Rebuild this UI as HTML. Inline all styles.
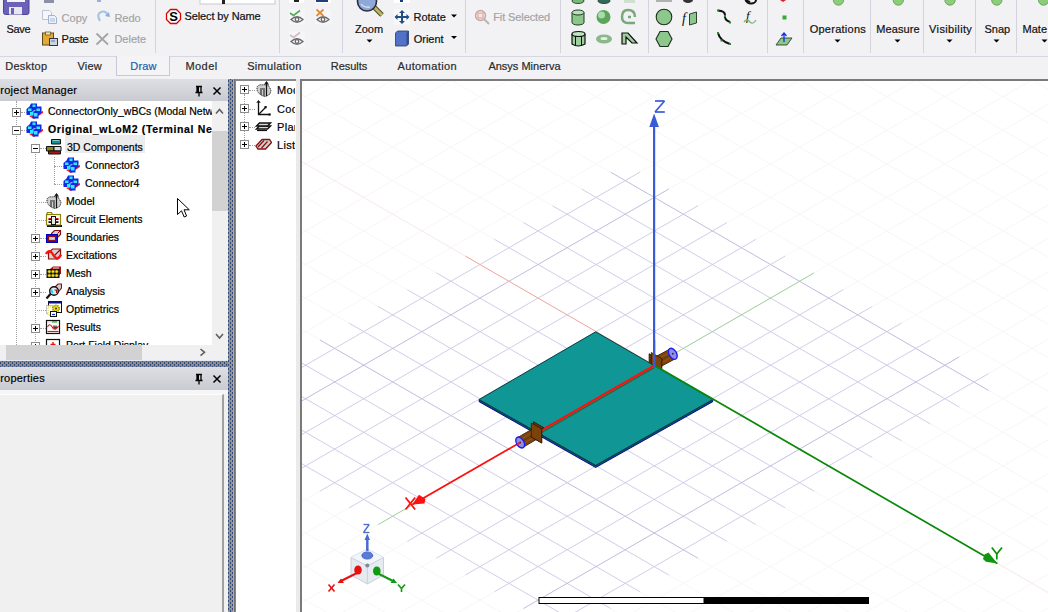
<!DOCTYPE html>
<html><head><meta charset="utf-8">
<style>
*{margin:0;padding:0;box-sizing:border-box}
html,body{width:1048px;height:612px;overflow:hidden;background:#f0f0f0;font-family:"Liberation Sans",sans-serif;font-size:12px;color:#000}
.abs{position:absolute}
.t{position:absolute;white-space:nowrap;line-height:14px;-webkit-text-stroke:0.2px currentColor}
#ribbon{position:absolute;left:0;top:0;width:1048px;height:57px;background:#f2f2f5;border-bottom:1px solid #d6d6e2}
.sep{position:absolute;top:0;width:1px;height:53px;background:#d4d4de}
#tabs{position:absolute;left:0;top:57px;width:1048px;height:22px;background:#f2f2f5}
.tab{position:absolute;top:5px;font-size:12px;color:#1a1a1a}
#drawtab{position:absolute;left:116px;top:56px;width:54px;height:20px;border:1px solid #c8c8dc;border-top:none;background:#f4f4f7}
.hdr{position:absolute;background:linear-gradient(#dedfe4,#c9cbd1);}
.splitV{position:absolute;background-color:#959390;background-image:conic-gradient(from 0deg at 1px 2px,transparent 75%,#2d4a86 0),conic-gradient(from 0deg at 1px 2px,transparent 75%,#2d4a86 0);background-size:4px 4px,4px 4px;background-position:0 1px,2px 3px}
.splitH{position:absolute;background-color:#959390;background-image:conic-gradient(from 0deg at 2px 1px,transparent 75%,#2d4a86 0),conic-gradient(from 0deg at 2px 1px,transparent 75%,#2d4a86 0);background-size:4px 4px,4px 4px;background-position:1px 0,3px 2px}
.row{position:absolute;height:18px;white-space:nowrap;font-size:12px;line-height:18px}
.pm{position:absolute;width:9px;height:9px;border:1px solid #8c8c8c;background:#fff}
.pm:before{content:"";position:absolute;left:1px;top:3px;width:5px;height:1px;background:#000}
.pm.plus:after{content:"";position:absolute;left:3px;top:1px;width:1px;height:5px;background:#000}
.tr{font-size:10.5px}
.rt{font-size:11px;color:#111}
.tb{font-size:11px;color:#2a2a2a}
.dotv{position:absolute;width:1px;border-left:1px dotted #a0a0a0}
.doth{position:absolute;height:1px;border-top:1px dotted #a0a0a0}
</style></head><body>

<!-- RIBBON -->
<div id="ribbon">
  <div class="sep" style="left:155px"></div>
  <div class="sep" style="left:279px"></div>
  <div class="sep" style="left:342px"></div>
  <div class="sep" style="left:465px"></div>
  <div class="sep" style="left:560px"></div>
  <div class="sep" style="left:648px"></div>
  <div class="sep" style="left:707px"></div>
  <div class="sep" style="left:767px"></div>
  <div class="sep" style="left:803px"></div>
  <div class="sep" style="left:870px"></div>
  <div class="sep" style="left:923px"></div>
  <div class="sep" style="left:975px"></div>
  <div class="sep" style="left:1016px"></div>
<svg class="abs" style="left:0;top:0" width="1048" height="57">
 <!-- Save floppy -->
 <path d="M3.5,-4 H29 V12.5 Q29,14.5 27,14.5 H5.5 Q3.5,14.5 3.5,12.5 Z" fill="#6b62b8" stroke="#4e4599" stroke-width="1"/>
 <rect x="7" y="-3" width="18" height="5" fill="#f4f4f8"/>
 <rect x="9" y="7" width="13" height="7.5" fill="#e8e8ec"/>
 <rect x="11" y="8" width="3" height="6" fill="#6b62b8"/>
 <!-- top cut-off icons -->
 <rect x="44" y="0" width="10" height="3" fill="#8a90a8"/>
 <rect x="97" y="0" width="4" height="2" fill="#9ab0d8"/>
 <rect x="200" y="-2" width="75" height="6" fill="#fff" stroke="#c8c8d0"/>
 <rect x="222" y="0" width="3" height="4" fill="#222"/>
 <rect x="289" y="0" width="15" height="3" fill="#fff"/><rect x="294" y="0" width="5" height="2" fill="#222"/>
 <rect x="315" y="0" width="16" height="3" fill="#fff"/><rect x="316" y="0" width="12" height="2" fill="#1f3f7a"/>
 <rect x="394" y="0" width="16" height="3" fill="#fff"/><rect x="400" y="0" width="3" height="2" fill="#1a3c7a"/>
 <!-- Copy (grey) -->
 <path d="M42.5,10.5 h7 l2,2 v7 h-9 z" fill="#f4f6fa" stroke="#b8c4d8"/>
 <path d="M48.5,15.5 h6 l2,2 v6 h-8 z" fill="#eef2f8" stroke="#9fb2d0"/>
 <line x1="50" y1="19" x2="55" y2="19" stroke="#a8bcd8"/><line x1="50" y1="21" x2="55" y2="21" stroke="#a8bcd8"/>
 <!-- Redo (grey) -->
 <path d="M100,21 Q96,14 101,12 Q106,10 108,16" fill="none" stroke="#a8c4e4" stroke-width="2.2"/>
 <path d="M105,16 L110,17 L109,12 Z" fill="#8ab0dc"/>
 <!-- Paste -->
 <rect x="42.5" y="33" width="11" height="12" fill="#e6a832" stroke="#5a4a20"/>
 <rect x="45.5" y="32" width="5" height="3" fill="#f2e6a0" stroke="#6a5a30" stroke-width="0.8"/>
 <rect x="49.5" y="38.5" width="8" height="7" fill="#c8d4e4" stroke="#303848"/>
 <line x1="51" y1="41" x2="55" y2="41" stroke="#6a7890"/>
 <!-- Delete X -->
 <path d="M96.5,33.5 L108,44.5 M108,33.5 L96.5,44.5" stroke="#a4a4a4" stroke-width="1.8"/>
 <!-- Select by name -->
 <path d="M170.5,9.5 h6 l4,4 v6 l-4,4 h-6 l-4,-4 v-6 z" fill="#fff" stroke="#e00000" stroke-width="1.3"/>
 <text x="173.6" y="21.3" font-family="Liberation Sans" font-weight="bold" font-size="13" text-anchor="middle" fill="#000">S</text>
 <!-- Eyes -->
 <rect x="289" y="9.5" width="16" height="15" fill="#f6f6f8"/>
 <rect x="315" y="9.5" width="16" height="15" fill="#f6f6f8"/>
 <rect x="289" y="31.5" width="16" height="15" fill="#f6f6f8"/>
 <g fill="none" stroke="#6a6a6a" stroke-width="1.3">
  <path d="M291,19.5 Q297,14 303,19.5 Q297,25 291,19.5 Z"/><circle cx="297" cy="19.5" r="1.8"/>
  <path d="M317,19.5 Q323,14 329,19.5 Q323,25 317,19.5 Z"/><circle cx="323" cy="19.5" r="1.8"/>
  <path d="M291,41.5 Q297,36 303,41.5 Q297,47 291,41.5 Z"/><circle cx="297" cy="41.5" r="1.8"/>
 </g>
 <path d="M290,13 L293.5,15.5 L300,10.5" fill="none" stroke="#58a858" stroke-width="1.6"/>
 <path d="M316.5,9.5 L323.5,16 M323.5,9.5 L316.5,16" stroke="#e48a30" stroke-width="1.8"/>
 <path d="M290,35 L293.5,37.5 L300,32.5" fill="none" stroke="#d4b8c4" stroke-width="1.6"/>
 <!-- Zoom magnifier -->
 <line x1="374" y1="7" x2="382" y2="15" stroke="#4a4a2a" stroke-width="5"/>
 <line x1="374" y1="7" x2="382" y2="15" stroke="#c0b860" stroke-width="3"/>
 <circle cx="367" cy="1.5" r="9.5" fill="#8fa8d8" stroke="#2a2a3a" stroke-width="1.6"/>
 <path d="M361,4 Q364,8 370,7" fill="none" stroke="#e0e8f8" stroke-width="1.2"/>
 <path d="M366.5,39.5 h6 l-3,3 z" fill="#000"/>
 <!-- Rotate -->
 <rect x="394" y="9.5" width="16" height="15" fill="#f8f8fa"/>
 <path d="M396,17 h12 M402,11 v12" stroke="#1f4f86" stroke-width="2"/>
 <path d="M394.5,17 l3,-3 v6 z M409.5,17 l-3,-3 v6 z M402,10 l-3,3 h6 z M402,24 l-3,-3 h6 z" fill="#1f4f86"/>
 <path d="M451,14.5 h6 l-3,3 z" fill="#000"/>
 <!-- Orient -->
 <path d="M395.5,33 l2,-2 h11 v13 l-2,2 h-11 z" fill="#5272c8" stroke="#2a3a6a" stroke-width="0.8"/>
 <path d="M406.5,33 l2,-2 v13 l-2,2 z" fill="#3a4a8a"/>
 <path d="M451,36 h6 l-3,3 z" fill="#000"/>
 <!-- Fit selected (grey) -->
 <circle cx="480.5" cy="15.5" r="5" fill="#f4e8e8" stroke="#c0a8a8" stroke-width="1.4"/>
 <rect x="478" y="13" width="5" height="5" fill="none" stroke="#e09a8a"/>
 <line x1="484" y1="19" x2="489" y2="24" stroke="#b8b8b0" stroke-width="2"/>
 <!-- 3D primitives -->
 <g stroke="#2a3a2a" stroke-width="0.9">
  <ellipse cx="578" cy="1" rx="6" ry="2.5" fill="#7ab87a"/>
  <ellipse cx="604" cy="1" rx="6" ry="2.5" fill="#2f6a5a"/>
 </g>
 <rect x="624" y="0" width="11" height="3" fill="#cfe0cf"/>
 <!-- cylinder -->
 <path d="M572,12.5 v10 a6,2.5 0 0 0 12,0 v-10" fill="#8cc68c" stroke="#1f3a1f"/>
 <ellipse cx="578" cy="12.5" rx="6" ry="2.5" fill="#b8e0b8" stroke="#1f3a1f"/>
 <!-- sphere -->
 <circle cx="603.5" cy="17" r="7" fill="#5aa65a"/>
 <circle cx="601.5" cy="15" r="3.5" fill="#a8dca8"/>
 <!-- helix -->
 <path d="M635,17 Q635,10 628,10 Q622,10 622,17 Q622,23 628,23 h7 M631,17 h-3" fill="none" stroke="#7aa87a" stroke-width="2.5"/>
 <!-- poly cylinder -->
 <path d="M572,34 v10 q6,4 13,0 v-10" fill="#9ed09e" stroke="#111" stroke-width="1.2"/>
 <ellipse cx="578.5" cy="34" rx="6.5" ry="2.5" fill="#c0e4c0" stroke="#111" stroke-width="1.2"/>
 <path d="M575.5,36 v9 M581.5,36 v9" stroke="#111"/>
 <!-- torus -->
 <ellipse cx="604" cy="39" rx="8" ry="4.5" fill="#8ab88a"/>
 <ellipse cx="604" cy="38.5" rx="3.5" ry="1.5" fill="#e8f0e8"/>
 <!-- bend -->
 <path d="M622,44 V33 h6 l9,10 h-5 l-6,-6 v7 z" fill="#9ed09e" stroke="#111" stroke-width="1.2"/>
 <!-- top shapes group 2 -->
 <rect x="656" y="0" width="16" height="2" fill="#b0b0b0"/>
 <ellipse cx="688" cy="0" rx="5" ry="3" fill="#333"/>
 <!-- circle -->
 <circle cx="664" cy="17" r="7.8" fill="#8cc78c" stroke="#1f2f1f" stroke-width="1.1"/>
 <!-- f rect -->
 <text x="682" y="23" font-family="Liberation Serif" font-style="italic" font-size="14" fill="#111">f</text>
 <path d="M689.5,14 l7,-2 v11 l-7,2 z" fill="#8cc78c" stroke="#1f2f1f" stroke-width="0.9"/>
 <!-- hexagon -->
 <path d="M660,31.5 h8 l4,7.5 l-4,7.5 h-8 l-4,-7.5 z" fill="#8cc78c" stroke="#1f2f1f" stroke-width="1.1"/>
 <!-- polylines -->
 <path d="M745,0 l5,2" stroke="#111" stroke-width="2"/>
 <ellipse cx="751" cy="0" rx="5" ry="3.5" fill="none" stroke="#111" stroke-width="2"/>
 <path d="M718,10.5 Q725,11 725,15 Q724,20 730,22" fill="none" stroke="#111" stroke-width="2"/>
 <rect x="717" y="9.5" width="2" height="2" fill="#2a8a2a"/><rect x="724" y="15" width="2" height="2" fill="#2a8a2a"/><rect x="729" y="21.5" width="2" height="2" fill="#2a8a2a"/>
 <path d="M718,33 Q720,41 730,44" fill="none" stroke="#111" stroke-width="2"/>
 <rect x="717" y="32" width="2" height="2" fill="#2a8a2a"/><rect x="720.5" y="39.5" width="2" height="2" fill="#2a8a2a"/><rect x="729" y="43" width="2" height="2" fill="#2a8a2a"/>
 <text x="746" y="20" font-family="Liberation Serif" font-style="italic" font-size="13" fill="#111">f</text>
 <path d="M744,22 q3,-4 6,0 q3,3 6,-2" fill="none" stroke="#7ab87a" stroke-width="1.3"/>
 <!-- small icons -->
 <path d="M780,0 h6 l-3,2 z" fill="#e02020"/>
 <rect x="782.5" y="15.5" width="4" height="4" fill="#3aa83a"/>
 <path d="M776,45 l5,-7 h11 l-5,7 z" fill="#8cc78c" stroke="#1f2f1f" stroke-width="0.8"/>
 <path d="M784,42 v-8 M781.5,36 l2.5,-3 l2.5,3" fill="none" stroke="#1030e0" stroke-width="1.3"/>
 <!-- green blobs -->
 <g fill="#8ccc7a" stroke="#5a9a50" stroke-width="0.8">
  <circle cx="838.5" cy="0" r="5.2"/><circle cx="898.3" cy="0" r="5.2"/><circle cx="950" cy="0" r="5.2"/><circle cx="996.8" cy="0" r="5.2"/><circle cx="1043.6" cy="0" r="5.2"/>
 </g>
 <g fill="#000">
  <path d="M834.5,39.5 h6 l-3,3 z"/><path d="M894.5,39.5 h6 l-3,3 z"/><path d="M946.5,39.5 h6 l-3,3 z"/><path d="M993.5,39.5 h6 l-3,3 z"/><path d="M1041.5,39.5 h6 l-3,3 z"/>
 </g>
</svg>
  <!-- texts -->
  <div class="t rt" style="left:6.5px;top:21.6px;letter-spacing:-0.35px">Save</div>
  <div class="t rt" style="left:61.6px;top:11.1px;color:#a4a4a4">Copy</div>
  <div class="t rt" style="left:114.4px;top:11.1px;color:#a4a4a4">Redo</div>
  <div class="t rt" style="left:61.6px;top:32.2px;letter-spacing:-0.3px">Paste</div>
  <div class="t rt" style="left:114.4px;top:32.2px;color:#a4a4a4">Delete</div>
  <div class="t rt" style="left:184.4px;top:9.2px;letter-spacing:-0.1px">Select by Name</div>
  <div class="t rt" style="left:355px;top:21.8px">Zoom</div>
  <div class="t rt" style="left:413.5px;top:9.8px">Rotate</div>
  <div class="t rt" style="left:413.7px;top:31.6px">Orient</div>
  <div class="t rt" style="left:493.2px;top:10.2px;color:#a4a4a4;letter-spacing:-0.1px">Fit Selected</div>
  <div class="t rt" style="left:809.7px;top:22.4px;letter-spacing:0.25px">Operations</div>
  <div class="t rt" style="left:876.2px;top:22.4px;letter-spacing:0.1px">Measure</div>
  <div class="t rt" style="left:929.1px;top:22.4px;letter-spacing:0.36px">Visibility</div>
  <div class="t rt" style="left:984.5px;top:22.4px">Snap</div>
  <div class="t rt" style="left:1022.6px;top:22.4px">Mate</div>
</div>

<!-- TABS -->
<div id="tabs"></div>
<div id="drawtab"></div>
<div class="t tb" style="left:5.3px;top:58.7px;letter-spacing:0.24px">Desktop</div>
<div class="t tb" style="left:77.5px;top:58.7px;letter-spacing:0.15px">View</div>
<div class="t tb" style="left:130.3px;top:58.7px;color:#1f5fa8;letter-spacing:0.2px">Draw</div>
<div class="t tb" style="left:185.4px;top:58.7px;letter-spacing:0.45px">Model</div>
<div class="t tb" style="left:247.2px;top:58.7px;letter-spacing:0.3px">Simulation</div>
<div class="t tb" style="left:330.7px;top:58.7px">Results</div>
<div class="t tb" style="left:397.4px;top:58.7px;letter-spacing:0.4px">Automation</div>
<div class="t tb" style="left:488.4px;top:58.7px">Ansys Minerva</div>

<!-- PROJECT MANAGER -->
<div class="hdr" style="left:0;top:79px;width:228px;height:22px"></div>
<div class="t" style="left:-7.3px;top:82.8px;font-size:11px;letter-spacing:0.25px">Project Manager</div>
<svg class="abs" style="left:190px;top:82px" width="36" height="16">
 <path d="M6,4.5 h6 M7,5 v5 M11,5 v5 M5.5,10.5 h7 M9,10.5 v4" stroke="#000" stroke-width="1.3" fill="none"/>
 <rect x="7" y="5" width="2" height="5" fill="#000"/>
 <path d="M23.5,5.5 l7,7 M30.5,5.5 l-7,7" stroke="#000" stroke-width="1.5"/>
</svg>
<div class="abs" style="left:0;top:101px;width:212px;height:244px;background:#fff"></div>
<div class="abs" style="left:0;top:101px;width:212px;height:244px;overflow:hidden"><div class="abs" style="left:0;top:-101px;width:212px;height:345px">
<div class="dotv" style="left:16px;top:101px;height:244px"></div>
<div class="dotv" style="left:35px;top:147px;height:198px"></div>
<div class="dotv" style="left:54px;top:157px;height:27px"></div>
<div class="doth" style="left:21px;top:112px;width:6px"></div>
<svg class="abs" style="left:26px;top:103px" width="17" height="16" viewBox="0 0 17 16">
<path d="M3,13 L8,16 L17,10 L17,8 Z" fill="#ff1a1a"/>
<path d="M5,0.5 h6 v3 h4.5 v6 l-3,2.5 v3.5 h-6 v-3.5 h-6 v-6 l3,-2.5 z" fill="#1028e8"/>
<rect x="6.5" y="1.5" width="3" height="2.5" fill="#30e8ff"/>
<rect x="2" y="5.5" width="3.5" height="2.5" fill="#30e8ff"/><rect x="10.5" y="5.5" width="3.5" height="2.5" fill="#30e8ff"/>
<rect x="4" y="9" width="3.5" height="3.5" fill="#30e8ff"/><rect x="8" y="10" width="3.5" height="3.5" fill="#30e8ff"/>
<path d="M6.5,8.5 l3,-1.2" stroke="#c0d0ff" stroke-width="1"/>
</svg>
<div class="t tr" style="left:48px;top:104px;">ConnectorOnly_wBCs (Modal Network)</div>
<div class="pm plus" style="left:12px;top:108px"></div>
<div class="doth" style="left:21px;top:130px;width:6px"></div>
<svg class="abs" style="left:26px;top:121px" width="17" height="16" viewBox="0 0 17 16">
<path d="M3,13 L8,16 L17,10 L17,8 Z" fill="#ff1a1a"/>
<path d="M5,0.5 h6 v3 h4.5 v6 l-3,2.5 v3.5 h-6 v-3.5 h-6 v-6 l3,-2.5 z" fill="#1028e8"/>
<rect x="6.5" y="1.5" width="3" height="2.5" fill="#30e8ff"/>
<rect x="2" y="5.5" width="3.5" height="2.5" fill="#30e8ff"/><rect x="10.5" y="5.5" width="3.5" height="2.5" fill="#30e8ff"/>
<rect x="4" y="9" width="3.5" height="3.5" fill="#30e8ff"/><rect x="8" y="10" width="3.5" height="3.5" fill="#30e8ff"/>
<path d="M6.5,8.5 l3,-1.2" stroke="#c0d0ff" stroke-width="1"/>
</svg>
<div class="t tr" style="left:48px;top:122px;font-weight:bold;letter-spacing:0.65px;">Original_wLoM2 (Terminal Network)</div>
<div class="pm" style="left:12px;top:126px"></div>
<div class="doth" style="left:40px;top:148px;width:6px"></div>
<div class="abs" style="left:65px;top:135px;width:80px;height:18px;background:#ececec"></div>
<svg class="abs" style="left:45px;top:139px" width="17" height="16" viewBox="0 0 17 16">
<path d="M6.5,0.5 h9 v4.5 h-9 z" fill="#1f8f8f" stroke="#111" stroke-width="1"/>
<path d="M7.5,1.5 h7" stroke="#7fd0d0" stroke-width="1"/>
<path d="M1.5,7.5 h7.5 v4.5 h-7.5 z" fill="#8a8a18" stroke="#111" stroke-width="1"/>
<path d="M9,7.5 h7 v4.5 h-7 z" fill="#d8d8d8" stroke="#111" stroke-width="1"/>
<path d="M3.5,12 h12 v3 h-12 z" fill="#a81818" stroke="#111" stroke-width="1"/>
</svg>
<div class="t tr" style="left:67px;top:140px;">3D Components</div>
<div class="pm" style="left:31px;top:144px"></div>
<div class="doth" style="left:54px;top:166px;width:10px"></div>
<svg class="abs" style="left:63px;top:157px" width="17" height="16" viewBox="0 0 17 16">
<path d="M3,13 L8,16 L17,10 L17,8 Z" fill="#ff1a1a"/>
<path d="M5,0.5 h6 v3 h4.5 v6 l-3,2.5 v3.5 h-6 v-3.5 h-6 v-6 l3,-2.5 z" fill="#1028e8"/>
<rect x="6.5" y="1.5" width="3" height="2.5" fill="#30e8ff"/>
<rect x="2" y="5.5" width="3.5" height="2.5" fill="#30e8ff"/><rect x="10.5" y="5.5" width="3.5" height="2.5" fill="#30e8ff"/>
<rect x="4" y="9" width="3.5" height="3.5" fill="#30e8ff"/><rect x="8" y="10" width="3.5" height="3.5" fill="#30e8ff"/>
<path d="M6.5,8.5 l3,-1.2" stroke="#c0d0ff" stroke-width="1"/>
</svg>
<div class="t tr" style="left:85px;top:158px;">Connector3</div>
<div class="doth" style="left:54px;top:184px;width:10px"></div>
<svg class="abs" style="left:63px;top:175px" width="17" height="16" viewBox="0 0 17 16">
<path d="M3,13 L8,16 L17,10 L17,8 Z" fill="#ff1a1a"/>
<path d="M5,0.5 h6 v3 h4.5 v6 l-3,2.5 v3.5 h-6 v-3.5 h-6 v-6 l3,-2.5 z" fill="#1028e8"/>
<rect x="6.5" y="1.5" width="3" height="2.5" fill="#30e8ff"/>
<rect x="2" y="5.5" width="3.5" height="2.5" fill="#30e8ff"/><rect x="10.5" y="5.5" width="3.5" height="2.5" fill="#30e8ff"/>
<rect x="4" y="9" width="3.5" height="3.5" fill="#30e8ff"/><rect x="8" y="10" width="3.5" height="3.5" fill="#30e8ff"/>
<path d="M6.5,8.5 l3,-1.2" stroke="#c0d0ff" stroke-width="1"/>
</svg>
<div class="t tr" style="left:85px;top:176px;">Connector4</div>
<div class="doth" style="left:35px;top:202px;width:11px"></div>
<svg class="abs" style="left:45px;top:193px" width="17" height="16" viewBox="0 0 17 16">
<path d="M2,6 q2,-3 6,-2 q2,-1 3,1 l2,-1 l3,5 l-1,4 q-3,2 -5,3 q-2,-1 -4,-2 q-3,-2 -4,-5 z" fill="#cfcfcf" stroke="#222" stroke-width="1" stroke-dasharray="1.2 0.8"/>
<path d="M6,9 v5 M9,9 v6 M5,8 h5" stroke="#222" stroke-width="1.1" fill="none"/>
<path d="M11.5,1 v14" stroke="#111" stroke-width="1.2"/>
<path d="M9.5,3.5 l2,-3 l2,3" fill="#111" stroke="#111" stroke-width="0.8"/>
</svg>
<div class="t tr" style="left:66px;top:194px;">Model</div>
<div class="doth" style="left:35px;top:220px;width:11px"></div>
<svg class="abs" style="left:45px;top:211px" width="17" height="16" viewBox="0 0 17 16">
<rect x="2" y="14" width="15" height="2" fill="#111"/>
<path d="M1.5,3.5 l1,-2 h4 l1,2 h8 v10.5 h-14 z" fill="#fbfbf4" stroke="#8a8210" stroke-width="1.2"/>
<path d="M2,3.5 h13.5" stroke="#8a8210" stroke-width="1.2"/>
<rect x="6.5" y="5.5" width="4" height="8" fill="#e8e8e8" stroke="#111" stroke-width="1"/>
<path d="M3.5,7.5 h3 M3.5,10.5 h3 M10.5,7.5 h3 M10.5,10.5 h3" stroke="#d01010" stroke-width="1.2"/>
<path d="M3.5,8.5 h3 M3.5,11.5 h3 M10.5,8.5 h3 M10.5,11.5 h3" stroke="#111" stroke-width="1"/>
</svg>
<div class="t tr" style="left:66px;top:212px;">Circuit Elements</div>
<div class="doth" style="left:40px;top:238px;width:6px"></div>
<svg class="abs" style="left:45px;top:229px" width="17" height="16" viewBox="0 0 17 16">
<path d="M6.5,4.5 l3,-3 h6 v4 l-3,3 h-6 z" fill="#d4d4d4" stroke="#8a1010" stroke-width="1.2"/>
<path d="M12.5,4.5 l3,-3" stroke="#8a1010" stroke-width="1"/>
<rect x="1.5" y="5.5" width="11" height="8" fill="#1010e8" stroke="#0000c0" stroke-width="1"/>
<rect x="3.5" y="7.5" width="7" height="4" fill="#d0d0d0" stroke="#8a1010" stroke-width="1.2"/>
</svg>
<div class="t tr" style="left:66px;top:230px;">Boundaries</div>
<div class="pm plus" style="left:31px;top:234px"></div>
<div class="doth" style="left:40px;top:256px;width:6px"></div>
<svg class="abs" style="left:45px;top:247px" width="17" height="16" viewBox="0 0 17 16">
<path d="M3.5,6 l4,-4 h8 v7 l-3,3 h-9 z" fill="#d4d4d4" stroke="#8a1010" stroke-width="1.2"/>
<path d="M9,9 l6,-6" stroke="#8a1010" stroke-width="1.2"/>
<path d="M1,7 q3,-5 6,-1 q3,5 5,5.5 q2,0 4,-4" fill="none" stroke="#ff1010" stroke-width="2.4"/>
</svg>
<div class="t tr" style="left:66px;top:248px;">Excitations</div>
<div class="pm plus" style="left:31px;top:252px"></div>
<div class="doth" style="left:40px;top:274px;width:6px"></div>
<svg class="abs" style="left:45px;top:265px" width="17" height="16" viewBox="0 0 17 16">
<path d="M5,4 l3,-2.5 h8 v7 l-3,3 z" fill="#a81010"/>
<path d="M8,3 h6" stroke="#e0e0e0" stroke-width="1"/>
<rect x="1.5" y="4" width="13" height="9" fill="#111"/>
<g fill="#f4e420" stroke="#8a7a00" stroke-width="0.5"><circle cx="4.3" cy="6.6" r="1.5"/><circle cx="8" cy="6.6" r="1.5"/><circle cx="11.7" cy="6.6" r="1.5"/><circle cx="4.3" cy="10.4" r="1.5"/><circle cx="8" cy="10.4" r="1.5"/><circle cx="11.7" cy="10.4" r="1.5"/></g>
</svg>
<div class="t tr" style="left:66px;top:266px;">Mesh</div>
<div class="pm plus" style="left:31px;top:270px"></div>
<div class="doth" style="left:40px;top:292px;width:6px"></div>
<svg class="abs" style="left:45px;top:283px" width="17" height="16" viewBox="0 0 17 16">
<path d="M9,5 l4,-4 h3.5 v4 l-4,5 z" fill="#d0d0d0" stroke="#8a1010" stroke-width="1.1"/>
<circle cx="9" cy="8" r="4.3" fill="#d8f0f8" stroke="#111" stroke-width="1.4"/>
<path d="M7,6.5 q-1,2 1,3.5" fill="none" stroke="#20d0f0" stroke-width="1.6"/>
<path d="M9.5,7 h2 v3" fill="none" stroke="#a01010" stroke-width="1.2"/>
<line x1="5.5" y1="11" x2="1.5" y2="15.5" stroke="#111" stroke-width="2.2"/>
</svg>
<div class="t tr" style="left:66px;top:284px;">Analysis</div>
<div class="pm plus" style="left:31px;top:288px"></div>
<div class="doth" style="left:35px;top:310px;width:11px"></div>
<svg class="abs" style="left:45px;top:301px" width="17" height="16" viewBox="0 0 17 16">
<rect x="3.5" y="0.5" width="13" height="11" fill="#fff" stroke="#111" stroke-width="1"/>
<rect x="3.5" y="0.5" width="13" height="2" fill="#10108a"/>
<rect x="1.5" y="4.5" width="6" height="8" fill="#fff" stroke="#888" stroke-width="1" stroke-dasharray="1 1"/>
<rect x="3" y="6" width="6" height="8" fill="#fff" stroke="#e8d020" stroke-width="1" stroke-dasharray="1 1"/>
<circle cx="11" cy="7.5" r="3.2" fill="#f0e010" stroke="#8a8a00" stroke-width="1.6" stroke-dasharray="1.2 0.8"/>
<circle cx="11" cy="7.5" r="1" fill="#333"/>
<rect x="5.5" y="10.5" width="6" height="5" fill="#fff" stroke="#111" stroke-width="1"/>
<path d="M7,13.5 h3" stroke="#1030d0" stroke-width="1.2"/>
</svg>
<div class="t tr" style="left:66px;top:302px;">Optimetrics</div>
<div class="doth" style="left:40px;top:328px;width:6px"></div>
<svg class="abs" style="left:45px;top:319px" width="17" height="16" viewBox="0 0 17 16">
<rect x="1.5" y="1.5" width="13" height="13" fill="#fff" stroke="#111" stroke-width="1.2"/>
<rect x="2.2" y="2.2" width="11.6" height="1.3" fill="#d8d8d8"/>
<rect x="7" y="2.2" width="5" height="1.3" fill="#20c020"/>
<path d="M2.5,8 q2,-4 4,-1 q2,4 4,3 q2,-1 3,-3" fill="none" stroke="#ee1010" stroke-width="1.1"/>
<path d="M9,6.5 v2.5 M11,6.5 v2.5 M9,9 h2" stroke="#111" stroke-width="1.2"/>
<path d="M2.5,12.5 h11" stroke="#ee1010" stroke-width="1.2"/>
</svg>
<div class="t tr" style="left:66px;top:320px;">Results</div>
<div class="pm plus" style="left:31px;top:324px"></div>
<div class="doth" style="left:40px;top:346px;width:6px"></div>
<svg class="abs" style="left:45px;top:337px" width="17" height="16" viewBox="0 0 17 16">
<rect x="1.5" y="2.5" width="13" height="13" fill="#fff" stroke="#111" stroke-width="1.2"/>
<path d="M8,5 v5 M5.5,7.5 h5" stroke="#ee1010" stroke-width="1.4"/>
<rect x="3" y="8" width="1.2" height="1.2" fill="#ee1010"/><rect x="11.8" y="8" width="1.2" height="1.2" fill="#ee1010"/>
</svg>
<div class="t tr" style="left:66px;top:338px;">Port Field Display</div>
<div class="pm plus" style="left:31px;top:342px"></div>
</div></div>
<div class="abs" style="left:212px;top:101px;width:16px;height:244px;background:#f0f0f0"></div>
<div class="abs" style="left:212px;top:131px;width:16px;height:80px;background:#d2d2d2"></div>
<div class="abs" style="left:0;top:345px;width:228px;height:16px;background:#f0f0f0"></div>
<div class="abs" style="left:6px;top:345px;width:136px;height:15px;background:#d2d2d2"></div>
<svg class="abs" style="left:0;top:100px" width="228" height="262">
 <path d="M216,13.5 l3.5,-4 l3.5,4" fill="none" stroke="#606060" stroke-width="1.6"/>
 <path d="M216,234 l3.5,4 l3.5,-4" fill="none" stroke="#606060" stroke-width="1.6"/>
 <path d="M200.5,249 l4,3.3 l-4,3.3" fill="none" stroke="#606060" stroke-width="1.6"/>
</svg>
<svg class="abs" style="left:177px;top:198px" width="14" height="21">
 <path d="M0.5,0.5 V16.5 L4.5,12.8 L7.2,19 L9.6,18 L7,11.8 H12.3 Z" fill="#fff" stroke="#000" stroke-width="1" stroke-linejoin="miter"/>
</svg>

<!-- splitters -->
<div class="splitV" style="left:228px;top:79px;width:5px;height:533px"></div>
<div class="abs" style="left:0;top:360px;width:228px;height:1px;background:#e8e8e8"></div><div class="splitV" style="left:0;top:361px;width:228px;height:6px;background-color:#8e8c8a"></div>
<div class="abs" style="left:233px;top:79px;width:1px;height:533px;background:#aab0b8"></div><div class="abs" style="left:234px;top:79px;width:1px;height:533px;background:#707070"></div>

<!-- PROPERTIES -->
<div class="hdr" style="left:0;top:367px;width:228px;height:23px"></div>
<div class="t" style="left:-7.3px;top:371px;font-size:11px;letter-spacing:0.2px">Properties</div>
<svg class="abs" style="left:190px;top:370px" width="36" height="16">
 <path d="M6,4.5 h6 M7,5 v5 M11,5 v5 M5.5,10.5 h7 M9,10.5 v4" stroke="#000" stroke-width="1.3" fill="none"/>
 <rect x="7" y="5" width="2" height="5" fill="#000"/>
 <path d="M23.5,5.5 l7,7 M30.5,5.5 l-7,7" stroke="#000" stroke-width="1.5"/>
</svg>
<div class="abs" style="left:0;top:390px;width:228px;height:222px;background:#f0f0f0"></div>
<div class="abs" style="left:0;top:390px;width:228px;height:4px;background:#f6f6f6"></div><div class="abs" style="left:0;top:394px;width:224px;height:218px;background:#f0f0f0;border-top:1px solid #fdfdfd;border-right:2px solid #a0a0a0"></div>

<!-- MODEL TREE -->
<div class="abs" style="left:235px;top:79px;width:61px;height:533px;background:#fff;border-top:2px solid #888;border-left:1px solid #888"></div>
<div class="abs" style="left:236px;top:81px;width:59px;height:531px;overflow:hidden"><div class="abs" style="left:-236px;top:-81px;width:300px;height:612px">
<div class="dotv" style="left:244px;top:94px;height:48px"></div>
<div class="doth" style="left:249px;top:90px;width:6px"></div>
<svg class="abs" style="left:255px;top:81px" width="17" height="16" viewBox="0 0 17 16">
<path d="M2,6 q2,-3 6,-2 q2,-1 3,1 l2,-1 l3,5 l-1,4 q-3,2 -5,3 q-2,-1 -4,-2 q-3,-2 -4,-5 z" fill="#cfcfcf" stroke="#222" stroke-width="1" stroke-dasharray="1.2 0.8"/>
<path d="M6,9 v5 M9,9 v6 M5,8 h5" stroke="#222" stroke-width="1.1" fill="none"/>
<path d="M11.5,1 v14" stroke="#111" stroke-width="1.2"/>
<path d="M9.5,3.5 l2,-3 l2,3" fill="#111" stroke="#111" stroke-width="0.8"/>
</svg>
<div class="t tr" style="left:277px;top:82.5px;font-size:11px;letter-spacing:0.3px">Model</div>
<div class="pm plus" style="left:240px;top:85px"></div>
<div class="doth" style="left:249px;top:109px;width:6px"></div>
<svg class="abs" style="left:255px;top:100px" width="17" height="16" viewBox="0 0 17 16"><path d="M3.5,1 v13.5 h11" fill="none" stroke="#111" stroke-width="1.3"/><path d="M3.5,14.5 l7,-7" stroke="#111" stroke-width="1.3"/><rect x="9.5" y="6" width="2.2" height="2.2" fill="#111"/><rect x="13.5" y="13.4" width="2.2" height="2.2" fill="#111"/><path d="M1.8,3 l1.7,-2.5 l1.7,2.5" fill="none" stroke="#111" stroke-width="1"/></svg>
<div class="t tr" style="left:277px;top:102px;font-size:11px;letter-spacing:0.3px">Coordinate Systems</div>
<div class="pm plus" style="left:240px;top:104px"></div>
<div class="doth" style="left:249px;top:127px;width:6px"></div>
<svg class="abs" style="left:255px;top:118px" width="17" height="16" viewBox="0 0 17 16"><path d="M1.5,11 l3,-3 h11 l-3,3 z" fill="#d8d8d8" stroke="#111" stroke-width="1.4"/><path d="M1.5,8 l3,-3 h11 l-3,3 z" fill="#d8d8d8" stroke="#111" stroke-width="1.4"/><path d="M2,12.5 h10" stroke="#111" stroke-width="1.2"/></svg>
<div class="t tr" style="left:277px;top:120.2px;font-size:11px;letter-spacing:0.3px">Planes</div>
<div class="pm plus" style="left:240px;top:122px"></div>
<div class="doth" style="left:249px;top:145px;width:6px"></div>
<svg class="abs" style="left:255px;top:136px" width="17" height="16" viewBox="0 0 17 16"><path d="M1,10 l6,-6.5 h7.5 l2,3 l-6,6.5 h-7.5 z" fill="#d0d0d0" stroke="#8a1010" stroke-width="1.3"/><path d="M3,11 l6,-6.5 M6.5,12 l6,-6.5" stroke="#8a1010" stroke-width="1.2"/></svg>
<div class="t tr" style="left:277px;top:138.1px;font-size:11px;letter-spacing:0.3px">Lists</div>
<div class="pm plus" style="left:240px;top:140px"></div>
</div></div>
<div class="abs" style="left:296px;top:79px;width:4px;height:533px;background:#eaeaea"></div>

<!-- 3D VIEW -->
<div class="abs" style="left:300px;top:79px;width:748px;height:533px;background:#fff;border-top:2px solid #7a7a7a;border-left:2px solid #7a7a7a;overflow:hidden">
<svg width="746" height="531" style="position:absolute;left:0;top:0">
<line x1="352.3" y1="-1058.2" x2="2677.1" y2="284.2" stroke="#f8f6f7" stroke-width="1" />
<line x1="323.2" y1="-1041.4" x2="2648.0" y2="301.0" stroke="#f8f6f7" stroke-width="1" />
<line x1="294.2" y1="-1024.6" x2="2619.0" y2="317.8" stroke="#f8f6f7" stroke-width="1" />
<line x1="265.1" y1="-1007.9" x2="2589.9" y2="334.5" stroke="#f8f6f7" stroke-width="1" />
<line x1="236.1" y1="-991.1" x2="2560.9" y2="351.3" stroke="#f8f6f7" stroke-width="1" />
<line x1="207.0" y1="-974.3" x2="2531.8" y2="368.1" stroke="#f8f6f7" stroke-width="1" />
<line x1="177.9" y1="-957.5" x2="2502.7" y2="384.9" stroke="#f8f6f7" stroke-width="1" />
<line x1="148.9" y1="-940.7" x2="2473.7" y2="401.7" stroke="#f8f6f7" stroke-width="1" />
<line x1="119.8" y1="-924.0" x2="2444.6" y2="418.4" stroke="#f8f6f7" stroke-width="1" />
<line x1="90.8" y1="-907.2" x2="2415.6" y2="435.2" stroke="#f8f6f7" stroke-width="1" />
<line x1="61.7" y1="-890.4" x2="2386.5" y2="452.0" stroke="#f8f6f7" stroke-width="1" />
<line x1="32.6" y1="-873.6" x2="2357.4" y2="468.8" stroke="#f8f6f7" stroke-width="1" />
<line x1="3.6" y1="-856.8" x2="2328.4" y2="485.6" stroke="#f8f6f7" stroke-width="1" />
<line x1="-25.5" y1="-840.1" x2="2299.3" y2="502.3" stroke="#f8f6f7" stroke-width="1" />
<line x1="-54.5" y1="-823.3" x2="2270.3" y2="519.1" stroke="#f8f6f7" stroke-width="1" />
<line x1="-83.6" y1="-806.5" x2="2241.2" y2="535.9" stroke="#f8f6f7" stroke-width="1" />
<line x1="-112.7" y1="-789.7" x2="2212.1" y2="552.7" stroke="#f8f6f7" stroke-width="1" />
<line x1="-141.7" y1="-772.9" x2="2183.1" y2="569.5" stroke="#f8f6f7" stroke-width="1" />
<line x1="-170.8" y1="-756.2" x2="2154.0" y2="586.2" stroke="#f8f6f7" stroke-width="1" />
<line x1="-199.8" y1="-739.4" x2="2125.0" y2="603.0" stroke="#f8f6f7" stroke-width="1" />
<line x1="-228.9" y1="-722.6" x2="2095.9" y2="619.8" stroke="#f8f6f7" stroke-width="1" />
<line x1="-258.0" y1="-705.8" x2="2066.8" y2="636.6" stroke="#f8f6f7" stroke-width="1" />
<line x1="-287.0" y1="-689.0" x2="2037.8" y2="653.4" stroke="#f8f6f7" stroke-width="1" />
<line x1="-316.1" y1="-672.3" x2="2008.7" y2="670.1" stroke="#f8f6f7" stroke-width="1" />
<line x1="-345.1" y1="-655.5" x2="1979.7" y2="686.9" stroke="#f8f6f7" stroke-width="1" />
<line x1="-374.2" y1="-638.7" x2="1950.6" y2="703.7" stroke="#f8f6f7" stroke-width="1" />
<line x1="-403.3" y1="-621.9" x2="1921.5" y2="720.5" stroke="#f8f6f7" stroke-width="1" />
<line x1="-432.3" y1="-605.1" x2="1892.5" y2="737.3" stroke="#f8f6f7" stroke-width="1" />
<line x1="-461.4" y1="-588.4" x2="1863.4" y2="754.0" stroke="#f8f6f7" stroke-width="1" />
<line x1="-490.4" y1="-571.6" x2="1834.4" y2="770.8" stroke="#f8f6f7" stroke-width="1" />
<line x1="-519.5" y1="-554.8" x2="1805.3" y2="787.6" stroke="#f8f6f7" stroke-width="1" />
<line x1="-548.6" y1="-538.0" x2="1776.2" y2="804.4" stroke="#f8f6f7" stroke-width="1" />
<line x1="-577.6" y1="-521.2" x2="1747.2" y2="821.2" stroke="#f8f6f7" stroke-width="1" />
<line x1="-606.7" y1="-504.5" x2="1718.1" y2="837.9" stroke="#f8f6f7" stroke-width="1" />
<line x1="-635.7" y1="-487.7" x2="1689.1" y2="854.7" stroke="#f8f6f7" stroke-width="1" />
<line x1="-664.8" y1="-470.9" x2="1660.0" y2="871.5" stroke="#f8f6f7" stroke-width="1" />
<line x1="-693.9" y1="-454.1" x2="1630.9" y2="888.3" stroke="#f8f6f7" stroke-width="1" />
<line x1="-722.9" y1="-437.3" x2="1601.9" y2="905.1" stroke="#f8f6f7" stroke-width="1" />
<line x1="-752.0" y1="-420.6" x2="1572.8" y2="921.8" stroke="#f8f6f7" stroke-width="1" />
<line x1="-781.0" y1="-403.8" x2="1543.8" y2="938.6" stroke="#f8f6f7" stroke-width="1" />
<line x1="-810.1" y1="-387.0" x2="1514.7" y2="955.4" stroke="#f8f6f7" stroke-width="1" />
<line x1="-839.2" y1="-370.2" x2="1485.6" y2="972.2" stroke="#f8f6f7" stroke-width="1" />
<line x1="-868.2" y1="-353.4" x2="1456.6" y2="989.0" stroke="#f8f6f7" stroke-width="1" />
<line x1="-897.3" y1="-336.7" x2="1427.5" y2="1005.7" stroke="#f8f6f7" stroke-width="1" />
<line x1="-926.3" y1="-319.9" x2="1398.5" y2="1022.5" stroke="#f8f6f7" stroke-width="1" />
<line x1="-955.4" y1="-303.1" x2="1369.4" y2="1039.3" stroke="#f8f6f7" stroke-width="1" />
<line x1="-984.5" y1="-286.3" x2="1340.3" y2="1056.1" stroke="#f8f6f7" stroke-width="1" />
<line x1="-1013.5" y1="-269.5" x2="1311.3" y2="1072.9" stroke="#f8f6f7" stroke-width="1" />
<line x1="-1042.6" y1="-252.8" x2="1282.2" y2="1089.6" stroke="#f8f6f7" stroke-width="1" />
<line x1="-1071.6" y1="-236.0" x2="1253.2" y2="1106.4" stroke="#f8f6f7" stroke-width="1" />
<line x1="-1100.7" y1="-219.2" x2="1224.1" y2="1123.2" stroke="#f8f6f7" stroke-width="1" />
<line x1="-1129.8" y1="-202.4" x2="1195.0" y2="1140.0" stroke="#f8f6f7" stroke-width="1" />
<line x1="-1158.8" y1="-185.6" x2="1166.0" y2="1156.8" stroke="#f8f6f7" stroke-width="1" />
<line x1="-1187.9" y1="-168.9" x2="1136.9" y2="1173.5" stroke="#f8f6f7" stroke-width="1" />
<line x1="-1216.9" y1="-152.1" x2="1107.9" y2="1190.3" stroke="#f8f6f7" stroke-width="1" />
<line x1="-1246.0" y1="-135.3" x2="1078.8" y2="1207.1" stroke="#f8f6f7" stroke-width="1" />
<line x1="-1275.1" y1="-118.5" x2="1049.7" y2="1223.9" stroke="#f8f6f7" stroke-width="1" />
<line x1="-1304.1" y1="-101.7" x2="1020.7" y2="1240.7" stroke="#f8f6f7" stroke-width="1" />
<line x1="-1333.2" y1="-85.0" x2="991.6" y2="1257.4" stroke="#f8f6f7" stroke-width="1" />
<line x1="-1362.2" y1="-68.2" x2="962.6" y2="1274.2" stroke="#f8f6f7" stroke-width="1" />
<line x1="-1391.3" y1="-51.4" x2="933.5" y2="1291.0" stroke="#f8f6f7" stroke-width="1" />
<line x1="-1420.4" y1="-34.6" x2="904.4" y2="1307.8" stroke="#f8f6f7" stroke-width="1" />
<line x1="-1449.4" y1="-17.8" x2="875.4" y2="1324.6" stroke="#f8f6f7" stroke-width="1" />
<line x1="-1478.5" y1="-1.1" x2="846.3" y2="1341.3" stroke="#f8f6f7" stroke-width="1" />
<line x1="-1507.5" y1="15.7" x2="817.3" y2="1358.1" stroke="#f8f6f7" stroke-width="1" />
<line x1="-1536.6" y1="32.5" x2="788.2" y2="1374.9" stroke="#f8f6f7" stroke-width="1" />
<line x1="-1565.7" y1="49.3" x2="759.1" y2="1391.7" stroke="#f8f6f7" stroke-width="1" />
<line x1="-1594.7" y1="66.1" x2="730.1" y2="1408.5" stroke="#f8f6f7" stroke-width="1" />
<line x1="-1623.8" y1="82.8" x2="701.0" y2="1425.2" stroke="#f8f6f7" stroke-width="1" />
<line x1="-1652.8" y1="99.6" x2="672.0" y2="1442.0" stroke="#f8f6f7" stroke-width="1" />
<line x1="-1681.9" y1="116.4" x2="642.9" y2="1458.8" stroke="#f8f6f7" stroke-width="1" />
<line x1="-1711.0" y1="133.2" x2="613.8" y2="1475.6" stroke="#f8f6f7" stroke-width="1" />
<line x1="-1740.0" y1="150.0" x2="584.8" y2="1492.4" stroke="#f8f6f7" stroke-width="1" />
<line x1="-1769.1" y1="166.7" x2="555.7" y2="1509.1" stroke="#f8f6f7" stroke-width="1" />
<line x1="-1798.1" y1="183.5" x2="526.7" y2="1525.9" stroke="#f8f6f7" stroke-width="1" />
<line x1="-1827.2" y1="200.3" x2="497.6" y2="1542.7" stroke="#f8f6f7" stroke-width="1" />
<line x1="-1856.3" y1="217.1" x2="468.5" y2="1559.5" stroke="#f8f6f7" stroke-width="1" />
<line x1="-1885.3" y1="233.9" x2="439.5" y2="1576.3" stroke="#f8f6f7" stroke-width="1" />
<line x1="-1914.4" y1="250.6" x2="410.4" y2="1593.0" stroke="#f8f6f7" stroke-width="1" />
<line x1="-1943.4" y1="267.4" x2="381.4" y2="1609.8" stroke="#f8f6f7" stroke-width="1" />
<line x1="-1972.5" y1="284.2" x2="352.3" y2="1626.6" stroke="#f8f6f7" stroke-width="1" />
<line x1="352.3" y1="-1058.2" x2="-1972.5" y2="284.2" stroke="#f8f6f7" stroke-width="1" />
<line x1="381.4" y1="-1041.4" x2="-1943.4" y2="301.0" stroke="#f8f6f7" stroke-width="1" />
<line x1="410.4" y1="-1024.6" x2="-1914.4" y2="317.8" stroke="#f8f6f7" stroke-width="1" />
<line x1="439.5" y1="-1007.9" x2="-1885.3" y2="334.5" stroke="#f8f6f7" stroke-width="1" />
<line x1="468.5" y1="-991.1" x2="-1856.3" y2="351.3" stroke="#f8f6f7" stroke-width="1" />
<line x1="497.6" y1="-974.3" x2="-1827.2" y2="368.1" stroke="#f8f6f7" stroke-width="1" />
<line x1="526.7" y1="-957.5" x2="-1798.1" y2="384.9" stroke="#f8f6f7" stroke-width="1" />
<line x1="555.7" y1="-940.7" x2="-1769.1" y2="401.7" stroke="#f8f6f7" stroke-width="1" />
<line x1="584.8" y1="-924.0" x2="-1740.0" y2="418.4" stroke="#f8f6f7" stroke-width="1" />
<line x1="613.8" y1="-907.2" x2="-1711.0" y2="435.2" stroke="#f8f6f7" stroke-width="1" />
<line x1="642.9" y1="-890.4" x2="-1681.9" y2="452.0" stroke="#f8f6f7" stroke-width="1" />
<line x1="672.0" y1="-873.6" x2="-1652.8" y2="468.8" stroke="#f8f6f7" stroke-width="1" />
<line x1="701.0" y1="-856.8" x2="-1623.8" y2="485.6" stroke="#f8f6f7" stroke-width="1" />
<line x1="730.1" y1="-840.1" x2="-1594.7" y2="502.3" stroke="#f8f6f7" stroke-width="1" />
<line x1="759.1" y1="-823.3" x2="-1565.7" y2="519.1" stroke="#f8f6f7" stroke-width="1" />
<line x1="788.2" y1="-806.5" x2="-1536.6" y2="535.9" stroke="#f8f6f7" stroke-width="1" />
<line x1="817.3" y1="-789.7" x2="-1507.5" y2="552.7" stroke="#f8f6f7" stroke-width="1" />
<line x1="846.3" y1="-772.9" x2="-1478.5" y2="569.5" stroke="#f8f6f7" stroke-width="1" />
<line x1="875.4" y1="-756.2" x2="-1449.4" y2="586.2" stroke="#f8f6f7" stroke-width="1" />
<line x1="904.4" y1="-739.4" x2="-1420.4" y2="603.0" stroke="#f8f6f7" stroke-width="1" />
<line x1="933.5" y1="-722.6" x2="-1391.3" y2="619.8" stroke="#f8f6f7" stroke-width="1" />
<line x1="962.6" y1="-705.8" x2="-1362.2" y2="636.6" stroke="#f8f6f7" stroke-width="1" />
<line x1="991.6" y1="-689.0" x2="-1333.2" y2="653.4" stroke="#f8f6f7" stroke-width="1" />
<line x1="1020.7" y1="-672.3" x2="-1304.1" y2="670.1" stroke="#f8f6f7" stroke-width="1" />
<line x1="1049.7" y1="-655.5" x2="-1275.1" y2="686.9" stroke="#f8f6f7" stroke-width="1" />
<line x1="1078.8" y1="-638.7" x2="-1246.0" y2="703.7" stroke="#f8f6f7" stroke-width="1" />
<line x1="1107.9" y1="-621.9" x2="-1216.9" y2="720.5" stroke="#f8f6f7" stroke-width="1" />
<line x1="1136.9" y1="-605.1" x2="-1187.9" y2="737.3" stroke="#f8f6f7" stroke-width="1" />
<line x1="1166.0" y1="-588.4" x2="-1158.8" y2="754.0" stroke="#f8f6f7" stroke-width="1" />
<line x1="1195.0" y1="-571.6" x2="-1129.8" y2="770.8" stroke="#f8f6f7" stroke-width="1" />
<line x1="1224.1" y1="-554.8" x2="-1100.7" y2="787.6" stroke="#f8f6f7" stroke-width="1" />
<line x1="1253.2" y1="-538.0" x2="-1071.6" y2="804.4" stroke="#f8f6f7" stroke-width="1" />
<line x1="1282.2" y1="-521.2" x2="-1042.6" y2="821.2" stroke="#f8f6f7" stroke-width="1" />
<line x1="1311.3" y1="-504.5" x2="-1013.5" y2="837.9" stroke="#f8f6f7" stroke-width="1" />
<line x1="1340.3" y1="-487.7" x2="-984.5" y2="854.7" stroke="#f8f6f7" stroke-width="1" />
<line x1="1369.4" y1="-470.9" x2="-955.4" y2="871.5" stroke="#f8f6f7" stroke-width="1" />
<line x1="1398.5" y1="-454.1" x2="-926.3" y2="888.3" stroke="#f8f6f7" stroke-width="1" />
<line x1="1427.5" y1="-437.3" x2="-897.3" y2="905.1" stroke="#f8f6f7" stroke-width="1" />
<line x1="1456.6" y1="-420.6" x2="-868.2" y2="921.8" stroke="#f8f6f7" stroke-width="1" />
<line x1="1485.6" y1="-403.8" x2="-839.2" y2="938.6" stroke="#f8f6f7" stroke-width="1" />
<line x1="1514.7" y1="-387.0" x2="-810.1" y2="955.4" stroke="#f8f6f7" stroke-width="1" />
<line x1="1543.8" y1="-370.2" x2="-781.0" y2="972.2" stroke="#f8f6f7" stroke-width="1" />
<line x1="1572.8" y1="-353.4" x2="-752.0" y2="989.0" stroke="#f8f6f7" stroke-width="1" />
<line x1="1601.9" y1="-336.7" x2="-722.9" y2="1005.7" stroke="#f8f6f7" stroke-width="1" />
<line x1="1630.9" y1="-319.9" x2="-693.9" y2="1022.5" stroke="#f8f6f7" stroke-width="1" />
<line x1="1660.0" y1="-303.1" x2="-664.8" y2="1039.3" stroke="#f8f6f7" stroke-width="1" />
<line x1="1689.1" y1="-286.3" x2="-635.7" y2="1056.1" stroke="#f8f6f7" stroke-width="1" />
<line x1="1718.1" y1="-269.5" x2="-606.7" y2="1072.9" stroke="#f8f6f7" stroke-width="1" />
<line x1="1747.2" y1="-252.8" x2="-577.6" y2="1089.6" stroke="#f8f6f7" stroke-width="1" />
<line x1="1776.2" y1="-236.0" x2="-548.6" y2="1106.4" stroke="#f8f6f7" stroke-width="1" />
<line x1="1805.3" y1="-219.2" x2="-519.5" y2="1123.2" stroke="#f8f6f7" stroke-width="1" />
<line x1="1834.4" y1="-202.4" x2="-490.4" y2="1140.0" stroke="#f8f6f7" stroke-width="1" />
<line x1="1863.4" y1="-185.6" x2="-461.4" y2="1156.8" stroke="#f8f6f7" stroke-width="1" />
<line x1="1892.5" y1="-168.9" x2="-432.3" y2="1173.5" stroke="#f8f6f7" stroke-width="1" />
<line x1="1921.5" y1="-152.1" x2="-403.3" y2="1190.3" stroke="#f8f6f7" stroke-width="1" />
<line x1="1950.6" y1="-135.3" x2="-374.2" y2="1207.1" stroke="#f8f6f7" stroke-width="1" />
<line x1="1979.7" y1="-118.5" x2="-345.1" y2="1223.9" stroke="#f8f6f7" stroke-width="1" />
<line x1="2008.7" y1="-101.7" x2="-316.1" y2="1240.7" stroke="#f8f6f7" stroke-width="1" />
<line x1="2037.8" y1="-85.0" x2="-287.0" y2="1257.4" stroke="#f8f6f7" stroke-width="1" />
<line x1="2066.8" y1="-68.2" x2="-258.0" y2="1274.2" stroke="#f8f6f7" stroke-width="1" />
<line x1="2095.9" y1="-51.4" x2="-228.9" y2="1291.0" stroke="#f8f6f7" stroke-width="1" />
<line x1="2125.0" y1="-34.6" x2="-199.8" y2="1307.8" stroke="#f8f6f7" stroke-width="1" />
<line x1="2154.0" y1="-17.8" x2="-170.8" y2="1324.6" stroke="#f8f6f7" stroke-width="1" />
<line x1="2183.1" y1="-1.1" x2="-141.7" y2="1341.3" stroke="#f8f6f7" stroke-width="1" />
<line x1="2212.1" y1="15.7" x2="-112.7" y2="1358.1" stroke="#f8f6f7" stroke-width="1" />
<line x1="2241.2" y1="32.5" x2="-83.6" y2="1374.9" stroke="#f8f6f7" stroke-width="1" />
<line x1="2270.3" y1="49.3" x2="-54.5" y2="1391.7" stroke="#f8f6f7" stroke-width="1" />
<line x1="2299.3" y1="66.1" x2="-25.5" y2="1408.5" stroke="#f8f6f7" stroke-width="1" />
<line x1="2328.4" y1="82.8" x2="3.6" y2="1425.2" stroke="#f8f6f7" stroke-width="1" />
<line x1="2357.4" y1="99.6" x2="32.6" y2="1442.0" stroke="#f8f6f7" stroke-width="1" />
<line x1="2386.5" y1="116.4" x2="61.7" y2="1458.8" stroke="#f8f6f7" stroke-width="1" />
<line x1="2415.6" y1="133.2" x2="90.8" y2="1475.6" stroke="#f8f6f7" stroke-width="1" />
<line x1="2444.6" y1="150.0" x2="119.8" y2="1492.4" stroke="#f8f6f7" stroke-width="1" />
<line x1="2473.7" y1="166.7" x2="148.9" y2="1509.1" stroke="#f8f6f7" stroke-width="1" />
<line x1="2502.7" y1="183.5" x2="177.9" y2="1525.9" stroke="#f8f6f7" stroke-width="1" />
<line x1="2531.8" y1="200.3" x2="207.0" y2="1542.7" stroke="#f8f6f7" stroke-width="1" />
<line x1="2560.9" y1="217.1" x2="236.1" y2="1559.5" stroke="#f8f6f7" stroke-width="1" />
<line x1="2589.9" y1="233.9" x2="265.1" y2="1576.3" stroke="#f8f6f7" stroke-width="1" />
<line x1="2619.0" y1="250.6" x2="294.2" y2="1593.0" stroke="#f8f6f7" stroke-width="1" />
<line x1="2648.0" y1="267.4" x2="323.2" y2="1609.8" stroke="#f8f6f7" stroke-width="1" />
<line x1="2677.1" y1="284.2" x2="352.3" y2="1626.6" stroke="#f8f6f7" stroke-width="1" />
<line x1="308.7" y1="91.2" x2="686.5" y2="309.4" stroke="#b6b6de" stroke-width="0.87" />
<line x1="279.6" y1="108.0" x2="657.4" y2="326.1" stroke="#cacae9" stroke-width="0.87" />
<line x1="250.6" y1="124.8" x2="628.4" y2="342.9" stroke="#cacae9" stroke-width="0.87" />
<line x1="221.5" y1="141.6" x2="599.3" y2="359.7" stroke="#cacae9" stroke-width="0.87" />
<line x1="192.5" y1="158.3" x2="570.2" y2="376.5" stroke="#cacae9" stroke-width="0.87" />
<line x1="134.4" y1="191.9" x2="512.1" y2="410.1" stroke="#cacae9" stroke-width="0.87" />
<line x1="105.3" y1="208.7" x2="483.1" y2="426.8" stroke="#cacae9" stroke-width="0.87" />
<line x1="76.2" y1="225.5" x2="454.0" y2="443.6" stroke="#cacae9" stroke-width="0.87" />
<line x1="47.2" y1="242.2" x2="424.9" y2="460.4" stroke="#cacae9" stroke-width="0.87" />
<line x1="18.1" y1="259.0" x2="395.9" y2="477.2" stroke="#b6b6de" stroke-width="0.87" />
<line x1="-11.0" y1="275.8" x2="366.8" y2="494.0" stroke="#cacae9" stroke-width="0.87" />
<line x1="-40.0" y1="292.6" x2="337.8" y2="510.7" stroke="#cacae9" stroke-width="0.87" />
<line x1="-69.1" y1="309.4" x2="308.7" y2="527.5" stroke="#cacae9" stroke-width="0.87" />
<line x1="-98.1" y1="326.2" x2="279.6" y2="544.3" stroke="#cacae9" stroke-width="0.87" />
<line x1="337.8" y1="91.2" x2="-98.1" y2="342.9" stroke="#cacae9" stroke-width="0.87" />
<line x1="366.8" y1="108.0" x2="-69.1" y2="359.7" stroke="#b6b6de" stroke-width="0.87" />
<line x1="395.9" y1="124.8" x2="-40.0" y2="376.5" stroke="#cacae9" stroke-width="0.87" />
<line x1="424.9" y1="141.6" x2="-11.0" y2="393.3" stroke="#cacae9" stroke-width="0.87" />
<line x1="454.0" y1="158.3" x2="18.1" y2="410.1" stroke="#cacae9" stroke-width="0.87" />
<line x1="483.1" y1="175.1" x2="47.2" y2="426.8" stroke="#cacae9" stroke-width="0.87" />
<line x1="541.2" y1="208.7" x2="105.3" y2="460.4" stroke="#cacae9" stroke-width="0.87" />
<line x1="570.2" y1="225.5" x2="134.3" y2="477.2" stroke="#cacae9" stroke-width="0.87" />
<line x1="599.3" y1="242.2" x2="163.4" y2="494.0" stroke="#cacae9" stroke-width="0.87" />
<line x1="628.4" y1="259.0" x2="192.5" y2="510.7" stroke="#cacae9" stroke-width="0.87" />
<line x1="657.4" y1="275.8" x2="221.5" y2="527.5" stroke="#b6b6de" stroke-width="0.87" />
<line x1="686.5" y1="292.6" x2="250.6" y2="544.3" stroke="#cacae9" stroke-width="0.87" />
<line x1="541.2" y1="393.3" x2="1514.7" y2="955.4" stroke="#f9eaea" stroke-width="1" />
<line x1="-810.1" y1="-387.0" x2="163.4" y2="175.1" stroke="#f9ebeb" stroke-width="1" />
<line x1="163.4" y1="175.1" x2="541.2" y2="393.3" stroke="#f2a79c" stroke-width="1" />
<line x1="512.1" y1="191.9" x2="76.2" y2="443.6" stroke="#9fd09a" stroke-width="1" />
</svg>
<svg width="746" height="531" style="position:absolute;left:0;top:0">
<polygon points="357.3,286.3 373.6,277.6 368.0,268.0 351.7,276.7" fill="#7e440e" stroke="#3c2006" stroke-width="0.9" /><line x1="353.2" y1="279.3" x2="369.5" y2="270.6" stroke="#9a5a18" stroke-width="0.8" /><line x1="354.5" y1="281.5" x2="370.8" y2="272.8" stroke="#5e3208" stroke-width="0.8" /><line x1="355.8" y1="283.7" x2="372.0" y2="275.0" stroke="#9a5a18" stroke-width="0.8" /><polygon points="347.1,272.7 357.5,278.7 359.7,277.5 359.7,291.5 349.3,285.5 347.1,286.7" fill="#643206" stroke="#2e1804" stroke-width="0.8" /><polygon points="349.3,271.5 359.7,277.5 359.7,291.5 349.3,285.5" fill="#7c420c" stroke="#2e1804" stroke-width="0.8" />
<ellipse cx="370.8" cy="272.8" rx="6" ry="3.7" transform="rotate(60 370.8 272.8)" fill="#9090e0" stroke="#1c1cf4" stroke-width="1.4"/><circle cx="370.8" cy="272.8" r="1" fill="#3a2a6a"/>
<polygon points="177.1,318.5 293.7,384.3 410.8,318.5 410.8,320.7 293.7,386.5 177.1,320.7" fill="#0a5656" stroke="#0000a0" stroke-width="0.9" />
<polygon points="293.7,250.8 410.8,318.5 293.7,384.3 177.1,318.5" fill="#119696" stroke="#073f40" stroke-width="1" />
<line x1="352.3" y1="284.2" x2="110.2" y2="423.6" stroke="#ff1010" stroke-width="1.7" />
<line x1="352.3" y1="284.2" x2="695.4" y2="482.5" stroke="#0a8a0a" stroke-width="1.7" />
<line x1="352.1" y1="284.2" x2="352.1" y2="37.0" stroke="#3a5ad8" stroke-width="2.2" />
<polygon points="110.2,423.6 117.0,413.8 123.5,418.0 122.5,422.5" fill="#ff1010" stroke="none" stroke-width="1" />
<polygon points="695.4,482.5 686.5,471.5 682.5,473.5 681.0,478.0 684.0,480.8" fill="#10960f" stroke="none" stroke-width="1" />
<polygon points="352.1,32.5 347.3,46.0 356.9,46.0" fill="#3a5ad8" stroke="none" stroke-width="1" />
<line x1="103.5" y1="416.5" x2="113.2" y2="428.5" stroke="#ff1010" stroke-width="1.8" /><line x1="113.2" y1="416.5" x2="103.5" y2="428.5" stroke="#ff1010" stroke-width="1.8" />
<line x1="353.0" y1="20.0" x2="362.5" y2="20.0" stroke="#3a5ad8" stroke-width="1.7" /><line x1="362.5" y1="20.0" x2="353.0" y2="31.0" stroke="#3a5ad8" stroke-width="1.7" /><line x1="353.0" y1="31.0" x2="362.8" y2="31.0" stroke="#3a5ad8" stroke-width="1.7" />
<line x1="689.8" y1="466.5" x2="694.8" y2="473.0" stroke="#0a900a" stroke-width="1.7" /><line x1="700.0" y1="466.5" x2="694.8" y2="473.0" stroke="#0a900a" stroke-width="1.7" /><line x1="694.8" y1="473.0" x2="694.8" y2="478.5" stroke="#0a900a" stroke-width="1.7" />
<line x1="221.0" y1="362.2" x2="353.0" y2="286.2" stroke="#3d5a2a" stroke-width="1.2" />
<line x1="219.0" y1="361.0" x2="353.0" y2="284.2" stroke="#ff1010" stroke-width="1.8" />
<polygon points="237.3,356.8 221.0,366.3 215.4,356.7 231.7,347.2" fill="#7e440e" stroke="#3c2006" stroke-width="0.9" /><line x1="233.2" y1="349.8" x2="217.0" y2="359.3" stroke="#9a5a18" stroke-width="0.8" /><line x1="234.5" y1="352.0" x2="218.2" y2="361.5" stroke="#5e3208" stroke-width="0.8" /><line x1="235.8" y1="354.2" x2="219.5" y2="363.7" stroke="#9a5a18" stroke-width="0.8" /><polygon points="231.5,340.7 241.9,346.7 239.7,348.0 239.7,362.0 229.3,356.0 231.5,354.7" fill="#643206" stroke="#2e1804" stroke-width="0.8" /><polygon points="229.3,342.0 239.7,348.0 239.7,362.0 229.3,356.0" fill="#7c420c" stroke="#2e1804" stroke-width="0.8" />
<ellipse cx="218.2" cy="361.5" rx="6" ry="3.7" transform="rotate(60 218.2 361.5)" fill="#9090e0" stroke="#1c1cf4" stroke-width="1.4"/><circle cx="218.2" cy="361.5" r="1" fill="#3a2a6a"/>
<line x1="218.2" y1="361.5" x2="215.0" y2="363.3" stroke="#ff1010" stroke-width="2" />
<line x1="352.1" y1="287.0" x2="352.1" y2="259.0" stroke="#3a5ad8" stroke-width="2.2" />
<polygon points="65.3,468.0 81.5,476.5 81.5,494.0 65.3,503.0 49.0,494.0 49.0,476.5" fill="#e6ebf1" stroke="#c8d0da" stroke-width="1" />
<polygon points="65.3,468.0 81.5,476.5 65.3,485.0 49.0,476.5" fill="#f2f5f9" stroke="none" stroke-width="1" /><line x1="49.0" y1="476.5" x2="65.3" y2="485.0" stroke="#c8d0dc" stroke-width="1" /><line x1="81.5" y1="476.5" x2="65.3" y2="485.0" stroke="#c8d0dc" stroke-width="1" /><line x1="65.3" y1="485.0" x2="65.3" y2="503.0" stroke="#c8d0dc" stroke-width="1" />
<ellipse cx="65.30000000000001" cy="474.5" rx="5.5" ry="3.6" fill="#5a7ad8" stroke="#3a5ac0" stroke-width="0.8"/>
<ellipse cx="56" cy="489" rx="3.8" ry="4.6" fill="#e81010"/>
<ellipse cx="74.80000000000001" cy="490" rx="3.8" ry="4.6" fill="#109a10"/>
<circle cx="65.30000000000001" cy="484.4" r="2" fill="#808890"/>
<line x1="65.3" y1="470.0" x2="65.3" y2="456.0" stroke="#4a6ad0" stroke-width="2.5" /><polygon points="65.3,452.5 62.5,459.0 68.0,459.0" fill="#4a6ad0" stroke="none" stroke-width="1" />
<line x1="55.0" y1="492.0" x2="39.0" y2="500.0" stroke="#e81010" stroke-width="2" /><polygon points="35.5,502.0 39.0,497.5 42.0,502.0" fill="#e81010" stroke="none" stroke-width="1" />
<line x1="75.0" y1="492.0" x2="91.0" y2="500.0" stroke="#109a10" stroke-width="2" /><polygon points="95.0,502.0 88.5,502.0 91.5,497.5" fill="#109a10" stroke="none" stroke-width="1" />
<line x1="61.5" y1="443.5" x2="67.2" y2="443.5" stroke="#4a6ad0" stroke-width="1.3" /><line x1="67.2" y1="443.5" x2="61.5" y2="451.5" stroke="#4a6ad0" stroke-width="1.3" /><line x1="61.5" y1="451.5" x2="67.5" y2="451.5" stroke="#4a6ad0" stroke-width="1.3" />
<line x1="26.5" y1="503.5" x2="32.5" y2="510.5" stroke="#e81010" stroke-width="1.6" /><line x1="32.5" y1="503.5" x2="26.5" y2="510.5" stroke="#e81010" stroke-width="1.6" />
<line x1="96.0" y1="503.5" x2="99.5" y2="507.5" stroke="#109a10" stroke-width="1.6" /><line x1="103.0" y1="503.5" x2="99.5" y2="507.5" stroke="#109a10" stroke-width="1.6" /><line x1="99.5" y1="507.5" x2="99.5" y2="511.0" stroke="#109a10" stroke-width="1.6" /><rect x="237" y="516.5" width="165" height="6" fill="#fff" stroke="#000" stroke-width="1"/><rect x="402" y="516" width="165" height="7" fill="#000"/>
</svg>
</div>

</body></html>
